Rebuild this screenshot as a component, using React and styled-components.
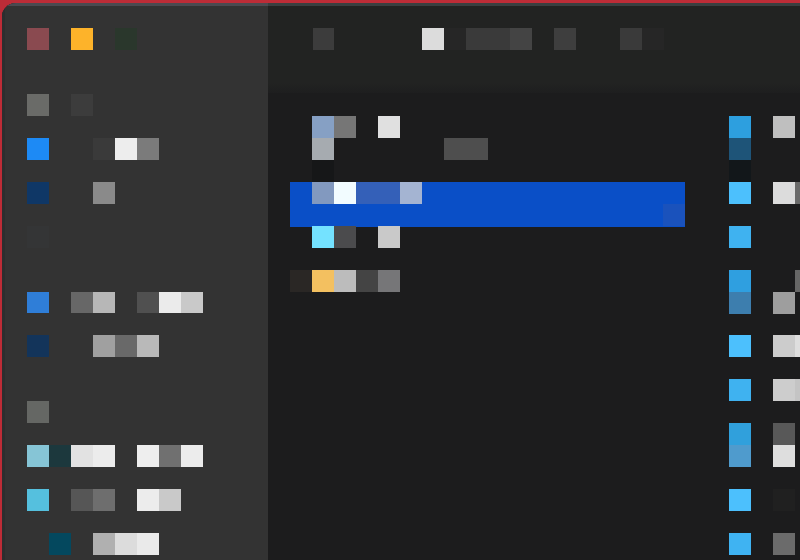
import React from "react";
import styled, { createGlobalStyle } from "styled-components";

const CELL = "21.94px";

const GlobalStyle = createGlobalStyle`
  html, body {
    margin: 0;
    height: 100%;
    overflow: hidden;
    background: #bd2c37;
  }
  #root {
    height: 100%;
  }
`;

const Screen = styled.div`
  height: 560px;
  width: 800px;
  overflow: hidden;
  padding: 3px 0 0 2px;
  box-sizing: border-box;
`;

const Window = styled.div`
  display: flex;
  height: 600px;
  width: 798px;
  border-top-left-radius: 14px;
  overflow: hidden;
  background: #1c1c1d;
`;

const Sidebar = styled.aside`
  flex: 0 0 266px;
  box-sizing: border-box;
  padding: 22.3px 0 0 22px;
  background: #333333;
  border-top: 3px solid #4b4a50;
  border-left: 3px solid #2c2e2f;
`;

const Main = styled.main`
  flex: 1;
  min-width: 0;
  display: flex;
  flex-direction: column;
`;

const Toolbar = styled.header`
  flex: 0 0 90px;
  box-sizing: border-box;
  padding: 22.3px 0 0 44.2px;
  background: linear-gradient(#222322 88%, #1e1e1f);
  border-top: 3px solid #3a3f40;
`;

const Content = styled.section`
  flex: 1;
  display: flex;
  min-height: 0;
`;

const ListPane = styled.div`
  flex: 0 0 461px;
  box-sizing: border-box;
  padding: 23.1px 0 0 22px;
`;

const DetailPane = styled.div`
  flex: 1;
  min-width: 0;
  overflow: hidden;
  padding-top: 23.1px;
`;

const Mosaic = styled.div`
  display: grid;
  grid-template-columns: repeat(${(p) => p.$cols}, ${CELL});
  grid-auto-rows: ${CELL};
`;

const Cell = styled.div`
  grid-column: ${(p) => p.$c + 1};
  grid-row: ${(p) => p.$r + 1};
  background: ${(p) => p.$color};
`;

const Selection = styled.div`
  grid-column: 1 / -1;
  grid-row: ${(p) => p.$r + 1} / span 2;
  margin-bottom: -1px;
  background: #0a4fc7;
`;

// cells are [column, row, colour], counted from the first cell of each pane
const sidebarCells = [
  [0, 0, "#8a4a50"], [2, 0, "#fdb32a"], [4, 0, "#2a372c"],
  [0, 3, "#6a6b68"], [2, 3, "#3c3c3c"],
  [0, 5, "#1d8af5"], [3, 5, "#3a3a3a"], [4, 5, "#ededed"], [5, 5, "#7b7b7b"],
  [0, 7, "#0f3766"], [3, 7, "#8a8a8a"],
  [0, 9, "#343536"],
  [0, 12, "#2f7ed8"], [2, 12, "#676767"], [3, 12, "#b7b7b7"], [5, 12, "#505050"], [6, 12, "#ebebeb"], [7, 12, "#c9c9c9"],
  [0, 14, "#13345a"], [3, 14, "#a0a0a0"], [4, 14, "#696969"], [5, 14, "#b9b9b9"],
  [0, 17, "#656764"],
  [0, 19, "#86c5d6"], [1, 19, "#1c383d"], [2, 19, "#e2e2e2"], [3, 19, "#ececec"], [5, 19, "#eeeeee"], [6, 19, "#707070"], [7, 19, "#ececec"],
  [0, 21, "#55c0de"], [2, 21, "#565656"], [3, 21, "#6e6e6e"], [5, 21, "#ececec"], [6, 21, "#c9c9c9"],
  [1, 23, "#04485e"], [3, 23, "#b0b0b0"], [4, 23, "#dcdcdc"], [5, 23, "#eaeaea"],
];

const toolbarCells = [
  [0, 0, "#3c3c3c"],
  [5, 0, "#dcdcdc"], [6, 0, "#262626"],
  [7, 0, "#3a3a3a"], [8, 0, "#3a3a3a"], [9, 0, "#444444"],
  [11, 0, "#3e3e3e"],
  [14, 0, "#3a3a3a"], [15, 0, "#262626"],
];

const listCells = [
  [1, 0, "#86a0c4"], [2, 0, "#767676"], [4, 0, "#e0e0e0"],
  [1, 1, "#a6abb0"], [7, 1, "#4e4e4e"], [8, 1, "#4e4e4e"],
  [1, 2, "#161718"],
  [1, 3, "#8299bf"], [2, 3, "#f2fcff"], [3, 3, "#3460b8"], [4, 3, "#3460b8"], [5, 3, "#a4b4d2"],
  [17, 4, "#1a52bc"],
  [1, 5, "#74e2ff"], [2, 5, "#4b4b4d"], [4, 5, "#c9c9c9"],
  [0, 7, "#2a2725"], [1, 7, "#f3c060"], [2, 7, "#bcbcbc"], [3, 7, "#444444"], [4, 7, "#767678"],
];

const detailCells = [
  [0, 0, "#2d9fdf"], [2, 0, "#bfbfbf"],
  [0, 1, "#1e5478"],
  [0, 2, "#12171a"],
  [0, 3, "#4cc0fd"], [2, 3, "#dcdcdc"], [3, 3, "#6a6a6a"],
  [0, 5, "#3fb2f0"],
  [0, 7, "#2f9fe0"], [3, 7, "#666666"],
  [0, 8, "#3d7eae"], [2, 8, "#9e9e9e"],
  [0, 10, "#4cc0fd"], [2, 10, "#cccccc"], [3, 10, "#dedede"],
  [0, 12, "#3fb2f0"], [2, 12, "#cdcdcd"], [3, 12, "#c4c4c4"],
  [0, 14, "#30a0dc"], [2, 14, "#585858"],
  [0, 15, "#4f9bcd"], [2, 15, "#dedede"],
  [0, 17, "#4cc0fd"], [2, 17, "#202020"],
  [0, 19, "#3fb3f2"], [2, 19, "#6b6b6b"],
];

const renderCells = (cells) =>
  cells.map(([c, r, color]) => <Cell key={`${c}-${r}`} $c={c} $r={r} $color={color} />);

const App = () => {
  return (
    <Screen>
      <GlobalStyle />
      <Window>
        <Sidebar>
          <Mosaic $cols={11}>{renderCells(sidebarCells)}</Mosaic>
        </Sidebar>
        <Main>
          <Toolbar>
            <Mosaic $cols={16}>{renderCells(toolbarCells)}</Mosaic>
          </Toolbar>
          <Content>
            <ListPane>
              <Mosaic $cols={18}>
                <Selection $r={3} />
                {renderCells(listCells)}
              </Mosaic>
            </ListPane>
            <DetailPane>
              <Mosaic $cols={4}>{renderCells(detailCells)}</Mosaic>
            </DetailPane>
          </Content>
        </Main>
      </Window>
    </Screen>
  );
};

export default App;
